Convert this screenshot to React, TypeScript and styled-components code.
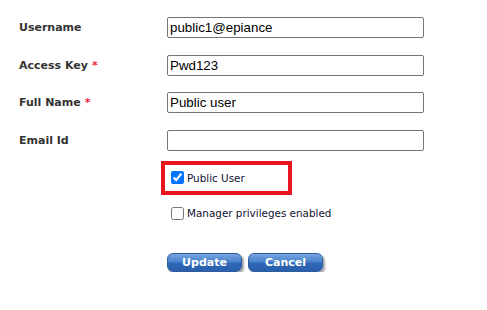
import React from "react";
import styled, { createGlobalStyle } from "styled-components";

const GlobalStyle = createGlobalStyle`
  html, body { margin: 0; padding: 0; background: #ffffff; }
  body { font-family: "DejaVu Sans", Verdana, sans-serif; }
`;

const Form = styled.form`
  padding: 17px 0 0 19px;
  width: 487px;
  box-sizing: border-box;
`;

const FieldGrid = styled.div`
  display: grid;
  grid-template-columns: 148px 257px;
  grid-auto-rows: 21px;
  row-gap: 16.5px;
  align-items: center;
`;

const Label = styled.label`
  font-family: "DejaVu Sans", Verdana, sans-serif;
  font-weight: bold;
  font-size: 11px;
  color: #333333;
  white-space: nowrap;
`;

const Required = styled.span`
  color: #ee1f3c;
  margin-left: 4px;
`;

const TextInput = styled.input`
  box-sizing: border-box;
  width: 257px;
  height: 21px;
  margin: 0;
  padding: 1px 2px;
  border: 1px solid #767676;
  border-radius: 2px;
  font-family: "Liberation Sans", Arial, sans-serif;
  font-size: 13.33px;
  color: #000000;
  background: #ffffff;
  outline: none;
`;

const Options = styled.div`
  margin: 10px 0 0 142px;
  display: flex;
  flex-direction: column;
`;

const Highlight = styled.div`
  box-sizing: border-box;
  width: 131px;
  height: 34px;
  border: 4px solid #e8151f;
  display: flex;
  align-items: center;
  padding-left: 6px;
`;

const CheckRow = styled.label<{ $indent?: number }>`
  display: flex;
  align-items: center;
  gap: 3px;
  padding-left: ${(p) => p.$indent ?? 0}px;
  font-family: "DejaVu Sans", Verdana, sans-serif;
  font-size: 10.4px;
  color: #111133;
  white-space: nowrap;
`;

const Check = styled.input`
  width: 13px;
  height: 13px;
  margin: 0;
`;

const SecondOption = styled.div`
  margin-top: 12px;
`;

const ButtonRow = styled.div`
  margin: 33px 0 0 148px;
  display: flex;
  gap: 6px;
`;

const Button = styled.button`
  box-sizing: border-box;
  width: 75px;
  height: 19px;
  padding: 0;
  border: 1px solid #2d5d9e;
  border-radius: 6px;
  background: linear-gradient(to bottom, #76a5de 0%, #4b83cc 45%, #2f68b8 55%, #2a5fab 100%);
  box-shadow: 2px 2px 2px rgba(0, 0, 0, 0.35);
  color: #ffffff;
  font-family: "DejaVu Sans", Verdana, sans-serif;
  font-weight: bold;
  font-size: 11px;
  line-height: 17px;
  cursor: pointer;
`;

export default function App() {
  return (
    <>
      <GlobalStyle />
      <Form onSubmit={(e) => e.preventDefault()}>
        <FieldGrid>
          <Label>Username</Label>
          <TextInput defaultValue="public1@epiance" />
          <Label>
            Access Key<Required>*</Required>
          </Label>
          <TextInput defaultValue="Pwd123" />
          <Label>
            Full Name<Required>*</Required>
          </Label>
          <TextInput defaultValue="Public user" />
          <Label>Email Id</Label>
          <TextInput defaultValue="" />
        </FieldGrid>
        <Options>
          <Highlight>
            <CheckRow>
              <Check type="checkbox" defaultChecked />
              Public User
            </CheckRow>
          </Highlight>
          <SecondOption>
            <CheckRow $indent={10}>
              <Check type="checkbox" />
              Manager privileges enabled
            </CheckRow>
          </SecondOption>
        </Options>
        <ButtonRow>
          <Button type="button">Update</Button>
          <Button type="button">Cancel</Button>
        </ButtonRow>
      </Form>
    </>
  );
}
